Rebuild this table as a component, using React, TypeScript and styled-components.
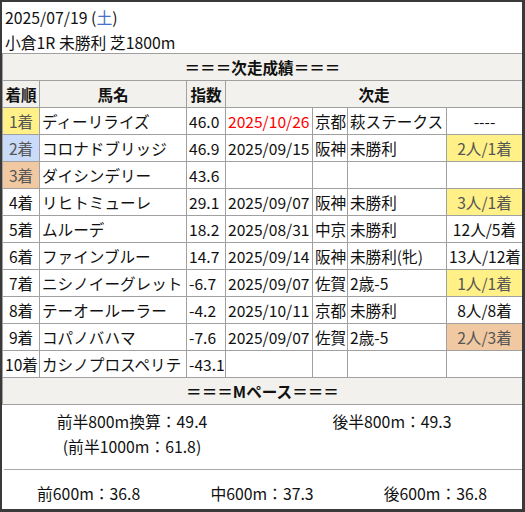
import React from "react";
import styled, { createGlobalStyle } from "styled-components";

const Global = createGlobalStyle`
  html, body { margin: 0; padding: 0; background: #3a3a3a; }
  body { font-family: "Noto Sans CJK JP", "Noto Sans", sans-serif; color: #111; }
`;

const Frame = styled.div`
  width: 520px;
  height: 507px;
  margin-top: 2px;
  margin-left: 2px;
  background: #fff;
  box-sizing: border-box;
  display: flex;
  flex-direction: column;
  overflow: hidden;
`;

const Header = styled.div`
  padding: 3px 0 0 3px;
  height: 51px;
  box-sizing: border-box;
  font-size: 15.8px;
  line-height: 25px;
`;

const Sat = styled.span`
  color: #4a6fc8;
`;

const Table = styled.table`
  border-collapse: collapse;
  table-layout: fixed;
  width: 520px;
  font-size: 15.6px;
`;

const Cell = styled.td<{ $align?: string; $bg?: string; $muted?: boolean; $red?: boolean }>`
  border: 1px solid #a0a0a0;
  height: 26px;
  padding: 0 2px;
  box-sizing: border-box;
  white-space: nowrap;
  overflow: visible;
  line-height: 26px;
  text-align: ${(p) => p.$align || "left"};
  background: ${(p) => p.$bg || "transparent"};
  color: ${(p) => (p.$red ? "#ff0000" : p.$muted ? "#555" : "#111")};
`;

const HeadCell = styled.th`
  border: 1px solid #a0a0a0;
  height: 26px;
  padding: 0;
  background: #f2f1ed;
  font-weight: bold;
  text-align: center;
  line-height: 26px;
`;

const PaceGrid = styled.div`
  display: grid;
  grid-template-columns: 1fr 1fr;
  padding-top: 4px;
  height: 64px;
  box-sizing: border-box;
  font-size: 15.8px;
  line-height: 25px;
  text-align: center;
`;

const Rule = styled.div`
  margin: 0 0 0 2px;
  height: 1px;
  background: #a8a8a8;
`;

const SplitRow = styled.div`
  display: grid;
  grid-template-columns: 1fr 1fr 1fr;
  padding-top: 11px;
  font-size: 15.8px;
  line-height: 25px;
  text-align: center;
`;

const COLORS: Record<string, string> = {
  gold: "#fff087",
  silver: "#c9dbf8",
  bronze: "#f0c9a2",
};

type Row = {
  rank: string;
  rankColor?: string;
  name: string;
  idx: string;
  date?: string;
  red?: boolean;
  place?: string;
  race?: string;
  result?: string;
  resColor?: string;
};

const rows: Row[] = [
  { rank: "1着", rankColor: "gold", name: "ディーリライズ", idx: "46.0", date: "2025/10/26", red: true, place: "京都", race: "萩ステークス", result: "----" },
  { rank: "2着", rankColor: "silver", name: "コロナドブリッジ", idx: "46.9", date: "2025/09/15", place: "阪神", race: "未勝利", result: "2人/1着", resColor: "gold" },
  { rank: "3着", rankColor: "bronze", name: "ダイシンデリー", idx: "43.6" },
  { rank: "4着", name: "リヒトミューレ", idx: "29.1", date: "2025/09/07", place: "阪神", race: "未勝利", result: "3人/1着", resColor: "gold" },
  { rank: "5着", name: "ムルーデ", idx: "18.2", date: "2025/08/31", place: "中京", race: "未勝利", result: "12人/5着" },
  { rank: "6着", name: "ファインブルー", idx: "14.7", date: "2025/09/14", place: "阪神", race: "未勝利(牝)", result: "13人/12着" },
  { rank: "7着", name: "ニシノイーグレット", idx: "-6.7", date: "2025/09/07", place: "佐賀", race: "2歳-5", result: "1人/1着", resColor: "gold" },
  { rank: "8着", name: "テーオールーラー", idx: "-4.2", date: "2025/10/11", place: "京都", race: "未勝利", result: "8人/8着" },
  { rank: "9着", name: "コパノバハマ", idx: "-7.6", date: "2025/09/07", place: "佐賀", race: "2歳-5", result: "2人/3着", resColor: "bronze" },
  { rank: "10着", name: "カシノプロスペリテ", idx: "-43.1" },
];

export default function App() {
  return (
    <>
      <Global />
      <Frame>
        <Header>
          <div>
            2025/07/19 (<Sat>土</Sat>)
          </div>
          <div>小倉1R 未勝利 芝1800m</div>
        </Header>
        <Table>
          <colgroup>
            <col style={{ width: 37 }} />
            <col style={{ width: 147 }} />
            <col style={{ width: 39 }} />
            <col style={{ width: 87 }} />
            <col style={{ width: 35 }} />
            <col style={{ width: 99 }} />
            <col style={{ width: 76 }} />
          </colgroup>
          <thead>
            <tr>
              <HeadCell colSpan={7}>＝＝＝次走成績＝＝＝</HeadCell>
            </tr>
            <tr>
              <HeadCell>着順</HeadCell>
              <HeadCell>馬名</HeadCell>
              <HeadCell>指数</HeadCell>
              <HeadCell colSpan={4}>次走</HeadCell>
            </tr>
          </thead>
          <tbody>
            {rows.map((r) => (
              <tr key={r.rank}>
                <Cell $align="center" $bg={r.rankColor ? COLORS[r.rankColor] : undefined} $muted={!!r.rankColor}>
                  {r.rank}
                </Cell>
                <Cell>{r.name}</Cell>
                <Cell>{r.idx}</Cell>
                <Cell $red={r.red}>{r.date}</Cell>
                <Cell>{r.place}</Cell>
                <Cell>{r.race}</Cell>
                <Cell $align="center" $bg={r.resColor ? COLORS[r.resColor] : undefined} $muted={!!r.resColor}>
                  {r.result}
                </Cell>
              </tr>
            ))}
            <tr>
              <HeadCell colSpan={7}>＝＝＝Mペース＝＝＝</HeadCell>
            </tr>
          </tbody>
        </Table>
        <PaceGrid>
          <div>
            前半800m換算：49.4
            <br />
            (前半1000m：61.8)
          </div>
          <div>後半800m：49.3</div>
        </PaceGrid>
        <Rule />
        <SplitRow>
          <div>前600m：36.8</div>
          <div>中600m：37.3</div>
          <div>後600m：36.8</div>
        </SplitRow>
      </Frame>
    </>
  );
}
